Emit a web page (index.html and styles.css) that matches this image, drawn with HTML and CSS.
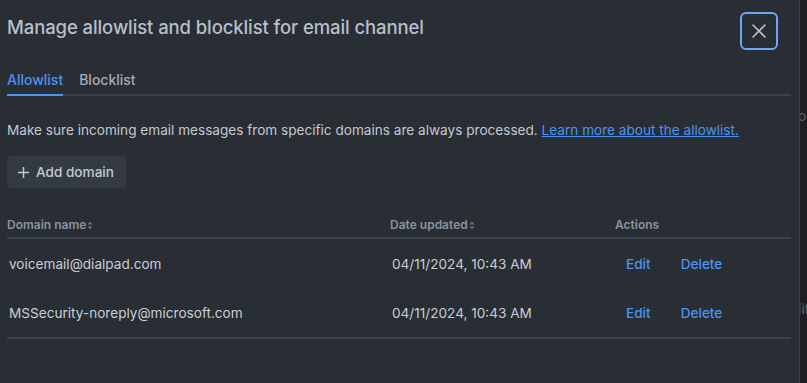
FILE: index.html
```html
<!DOCTYPE html>
<html lang="en">
<head>
    <meta charset="UTF-8">
    <meta name="viewport" content="width=device-width, initial-scale=1.0">
    <title>Manage allowlist and blocklist</title>
    <link rel="stylesheet" href="styles.css">
</head>
<body>
<div class="panel">
    <div class="panel-header">
        <h1>Manage allowlist and blocklist for email channel</h1>
        <button type="button" class="close-button" aria-label="Close">
            <svg width="16" height="16" viewBox="0 0 16 16">
                <path d="M2 2 L14 14 M14 2 L2 14" stroke="#b9c1cc" stroke-width="1.6" stroke-linecap="round"/>
            </svg>
        </button>
    </div>

    <div class="tabs">
        <span class="tab active">Allowlist</span>
        <span class="tab">Blocklist</span>
    </div>

    <p class="description">
        Make sure incoming email messages from specific domains are always processed.
        <a href="#">Learn more about the allowlist.</a>
    </p>

    <button type="button" class="add-button">
        <svg width="13" height="13" viewBox="0 0 13 13">
            <path d="M6.5 1 V12 M1 6.5 H12" stroke="#c3cad3" stroke-width="1.5"/>
        </svg>
        Add domain
    </button>

    <div class="table">
        <div class="row head">
            <div class="cell">Domain name
                <svg class="sort" width="6" height="9" viewBox="0 0 6 9"><path d="M0.5 3.5 L3 0.8 L5.5 3.5 Z M0.5 5.5 L3 8.2 L5.5 5.5 Z" fill="#6b7480"/></svg>
            </div>
            <div class="cell">Date updated
                <svg class="sort" width="6" height="9" viewBox="0 0 6 9"><path d="M0.5 3.5 L3 0.8 L5.5 3.5 Z M0.5 5.5 L3 8.2 L5.5 5.5 Z" fill="#6b7480"/></svg>
            </div>
            <div class="cell">Actions</div>
        </div>
        <div class="row">
            <div class="cell">voicemail@dialpad.com</div>
            <div class="cell">04/11/2024, 10:43 AM</div>
            <div class="cell actions"><a href="#">Edit</a><a href="#">Delete</a></div>
        </div>
        <div class="row">
            <div class="cell">MSSecurity-noreply@microsoft.com</div>
            <div class="cell">04/11/2024, 10:43 AM</div>
            <div class="cell actions"><a href="#">Edit</a><a href="#">Delete</a></div>
        </div>
    </div>
</div>
<div class="backdrop">
    <span class="ghost first">or</span>
    <span class="ghost second">lit</span>
</div>
</body>
</html>
```

FILE: styles.css
```css
body {
    background-color: #1c1e22;
    color: #c5ccd4;
    font-family: Inter, "Noto Sans", sans-serif;
    margin: 0;
    display: flex;
    height: 383px;
    overflow: hidden;
}

.panel {
    background-color: #292d34;
    width: 800px;
    padding: 0 8px 0 7px;
    box-sizing: border-box;
    border-right: 1px solid #3a3f46;
    flex: none;
}

.panel-header {
    display: flex;
    justify-content: space-between;
    align-items: flex-start;
    padding-top: 12px;
}

h1 {
    font-size: 18.5px;
    font-weight: 500;
    line-height: 24px;
    color: #b6bfcb;
    margin: 3px 0 0 0;
    letter-spacing: -0.1px;
}

.close-button {
    width: 38px;
    height: 38px;
    border: 2px solid #6ea6ef;
    border-radius: 6px;
    background: transparent;
    display: flex;
    align-items: center;
    justify-content: center;
    padding: 0;
    margin-right: 13px;
}

.tabs {
    display: flex;
    gap: 16px;
    margin-top: 20px;
    border-bottom: 2px solid #3b4148;
}

.tab {
    font-size: 14px;
    font-weight: 500;
    line-height: 20px;
    padding-bottom: 4px;
    margin-bottom: -2px;
    color: #a3acb8;
    border-bottom: 2px solid transparent;
}

.tab.active {
    color: #4b94f2;
    border-bottom-color: #4b94f2;
}

.description {
    font-size: 13.6px;
    line-height: 20px;
    margin: 24px 0 0 0;
    color: #c3c9d1;
}

.description a {
    color: #4b94f2;
}

.add-button {
    display: flex;
    align-items: center;
    gap: 6px;
    margin-top: 16px;
    height: 32px;
    padding: 0 12px 0 10px;
    border: none;
    border-radius: 4px;
    background-color: #343a41;
    color: #c3cad3;
    font-family: inherit;
    font-size: 13.6px;
    font-weight: 500;
}

.table {
    margin-top: 29px;
}

.row {
    display: grid;
    grid-template-columns: 383px 225px 1fr;
    align-items: center;
    height: 49px;
    font-size: 13.6px;
    color: #c8ced6;
}

.row .cell {
    padding-left: 2px;
}

.row.head {
    height: auto;
    align-items: end;
    font-size: 12px;
    font-weight: 600;
    line-height: 16px;
    color: #8a94a1;
    padding-bottom: 4px;
    border-bottom: 2px solid #3b4148;
}

.row.head .cell {
    padding-left: 0;
    display: flex;
    align-items: center;
    gap: 1px;
}

.row:last-child {
    border-bottom: 2px solid #3b4148;
}

.actions {
    display: flex;
    gap: 30px;
}

.row .actions {
    padding-left: 11px;
}

.actions a {
    color: #4b94f2;
    text-decoration: none;
    font-weight: 500;
}

.backdrop {
    flex: 1;
    position: relative;
    overflow: hidden;
    color: #5d636b;
    font-size: 14px;
    font-family: Inter, sans-serif;
}

.ghost {
    position: absolute;
    left: -2px;
}

.ghost.first {
    top: 107px;
}

.ghost.second {
    top: 300px;
}
```
